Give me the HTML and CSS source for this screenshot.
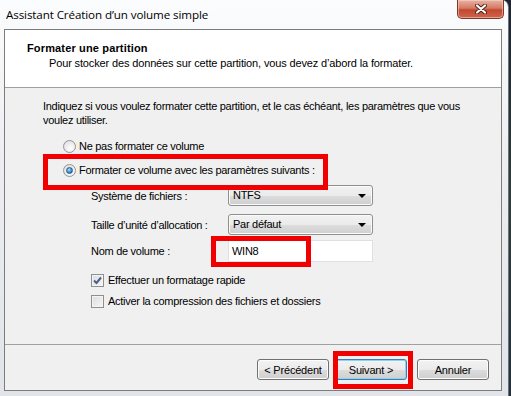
FILE: index.html
```html
<!DOCTYPE html>
<html lang="fr">
  <head>
    <meta charset="utf-8">
    <title>Assistant Création d'un volume simple</title>
    <link rel="stylesheet" href="styles.css">
  </head>
  <body>
    <div class="window">
      <div class="titlebar">
        <span class="title">Assistant Création d’un volume simple</span>
        <div class="close">
          <svg width="12" height="10" viewBox="0 0 12 10">
            <path d="M2 1.5 L10 8.5 M10 1.5 L2 8.5" stroke="#4b2219" stroke-width="4" stroke-linecap="round"/>
            <path d="M2 1.5 L10 8.5 M10 1.5 L2 8.5" stroke="#ffffff" stroke-width="2.2" stroke-linecap="round"/>
          </svg>
        </div>
      </div>

      <div class="client">
        <div class="header">
          <div class="header-title">Formater une partition</div>
          <div class="header-sub">Pour stocker des données sur cette partition, vous devez d’abord la formater.</div>
        </div>

        <div class="content">
          <p class="intro">Indiquez si vous voulez formater cette partition, et le cas échéant, les paramètres que vous<br>voulez utiliser.</p>

          <div class="option first">
            <span class="radio"></span>
            <span>Ne pas formater ce volume</span>
          </div>
          <div class="option second">
            <span class="radio checked"></span>
            <span>Formater ce volume avec les paramètres suivants :</span>
          </div>

          <div class="fields">
            <div class="field row1">
              <span class="label">Système de fichiers :</span>
              <div class="combo">NTFS<span class="arrow"></span></div>
            </div>
            <div class="field row2">
              <span class="label">Taille d’unité d’allocation :</span>
              <div class="combo">Par défaut<span class="arrow"></span></div>
            </div>
            <div class="field row3">
              <span class="label">Nom de volume :</span>
              <div class="textbox">WIN8</div>
            </div>
          </div>

          <div class="check first">
            <span class="box">
              <svg width="11" height="11" viewBox="0 0 11 11">
                <path d="M2 5.5 L4.5 8 L9 2.5" fill="none" stroke="#4a5f8f" stroke-width="2"/>
              </svg>
            </span>
            <span>Effectuer un formatage rapide</span>
          </div>
          <div class="check second">
            <span class="box"></span>
            <span>Activer la compression des fichiers et dossiers</span>
          </div>
        </div>

        <div class="footer">
          <button class="btn">&lt; Précédent</button>
          <button class="btn default">Suivant &gt;</button>
          <button class="btn cancel">Annuler</button>
        </div>
      </div>

      <div class="mark mark-option"></div>
      <div class="mark mark-name"></div>
      <div class="mark mark-next"></div>
    </div>
  </body>
</html>
```

FILE: styles.css
```css
html, body {
  margin: 0;
  padding: 0;
}
body {
  width: 511px;
  height: 396px;
  overflow: hidden;
  background: linear-gradient(#1d2530, #2e3d3a 50%, #23303c);
  font-family: "Liberation Sans", Arial, sans-serif;
  font-size: 11px;
  letter-spacing: -0.28px;
  color: #000;
}
.window {
  position: relative;
  box-sizing: border-box;
  width: 509px;
  height: 396px;
  padding: 0 6px 0 4px;
  background: linear-gradient(#fbfcfd, #eceef1 40%, #e1e4e8);
  border-top-right-radius: 7px;
  border-right: 1px solid #6d7278;
}
.titlebar {
  height: 29px;
  display: flex;
  align-items: flex-start;
}
.title {
  font-family: "Open Sans", "Noto Sans", sans-serif;
  font-size: 11.6px;
  margin: 7px 0 0 2px;
  letter-spacing: -0.1px;
}
.close {
  margin-left: auto;
  margin-right: -2px;
  width: 47px;
  height: 19px;
  box-sizing: border-box;
  border: 1px solid #7a3a2d;
  border-top: none;
  border-radius: 0 0 5px 5px;
  background: linear-gradient(#e8b3a4, #d47a64 45%, #c3472f 55%, #d0644d);
  box-shadow: inset 0 0 0 1px rgba(255, 220, 210, 0.5);
  display: flex;
  align-items: center;
  justify-content: center;
}
.client {
  height: 362px;
  box-sizing: border-box;
  border: 1px solid #7c7c7c;
  display: flex;
  flex-direction: column;
  background: #f0f0f0;
}
.header {
  height: 58px;
  box-sizing: border-box;
  background: #fff;
  border-bottom: 1px solid #a0a0a0;
  padding: 11px 0 0 22px;
  flex: none;
}
.header-title {
  font-weight: bold;
  line-height: 14px;
  letter-spacing: 0.15px;
}
.header-sub {
  line-height: 14px;
  margin-top: 1px;
  padding-left: 22px;
  letter-spacing: -0.14px;
}
.content {
  flex: 1;
  padding: 11px 0 0 38px;
}
.intro {
  margin: 0;
  line-height: 14px;
}
.option {
  display: flex;
  align-items: center;
  height: 16px;
  margin-left: 20px;
}
.option.first {
  margin-top: 11px;
}
.option.second {
  margin-top: 8px;
}
.radio {
  width: 13px;
  height: 13px;
  box-sizing: border-box;
  border-radius: 50%;
  border: 1px solid #949494;
  background: radial-gradient(circle at 60% 65%, #ffffff, #e4e4e4 70%, #d4d4d4);
  margin-right: 3px;
  position: relative;
}
.radio.checked::after {
  content: "";
  position: absolute;
  left: 2px;
  top: 2px;
  width: 7px;
  height: 7px;
  box-sizing: border-box;
  border-radius: 50%;
  border: 1px solid #265d8f;
  background: radial-gradient(circle at 40% 35%, #b9e2ff, #3a8ad0 55%, #1b5a9a);
}
.fields {
  margin-left: 48px;
  margin-top: 7px;
}
.field {
  display: flex;
  align-items: center;
}
.field.row2 {
  margin-top: 8px;
}
.field.row3 {
  margin-top: 5px;
}
.label {
  width: 137px;
}
.combo {
  position: relative;
  width: 145px;
  height: 21px;
  box-sizing: border-box;
  border: 1px solid #8e8f8f;
  border-radius: 3px;
  background: linear-gradient(#f2f2f2, #ebebeb 50%, #dddddd 51%, #cfcfcf);
  box-shadow: inset 0 0 0 1px #fafafa;
  padding: 3px 0 0 4px;
}
.arrow {
  position: absolute;
  right: 6px;
  top: 8px;
  width: 0;
  height: 0;
  border-left: 4px solid transparent;
  border-right: 4px solid transparent;
  border-top: 4px solid #000;
}
.textbox {
  width: 145px;
  height: 22px;
  box-sizing: border-box;
  border: 1px solid #dde1e6;
  background: #fff;
  padding: 4px 0 0 3px;
}
.check {
  display: flex;
  align-items: center;
  height: 16px;
  margin-left: 48px;
}
.check.first {
  margin-top: 10px;
}
.check.second {
  margin-top: 5px;
}
.box {
  width: 13px;
  height: 13px;
  box-sizing: border-box;
  border: 1px solid #8e8f8f;
  background: linear-gradient(135deg, #dcdcdc, #f6f6f6);
  box-shadow: inset 0 0 0 1px #f4f4f4;
  margin-right: 4px;
  display: flex;
  align-items: center;
  justify-content: center;
}
.footer {
  height: 46px;
  box-sizing: border-box;
  flex: none;
  border-top: 1px solid #a0a0a0;
  display: flex;
  justify-content: flex-end;
  align-items: flex-start;
  padding: 14px 12px 0 0;
}
.btn {
  width: 72px;
  height: 21px;
  box-sizing: border-box;
  border: 1px solid #707070;
  border-radius: 3px;
  background: linear-gradient(#f2f2f2, #ebebeb 50%, #dddddd 51%, #cfcfcf);
  box-shadow: inset 0 0 0 1px #fcfcfc;
  font-family: "Liberation Sans", Arial, sans-serif;
  font-size: 11px;
  letter-spacing: -0.2px;
  color: #000;
  padding: 0;
}
.btn.default {
  margin-left: 6px;
  border-color: #3c7fb1;
  box-shadow: inset 0 0 0 1px #8fd0f5;
}
.btn.cancel {
  margin-left: 10px;
}
.mark {
  position: absolute;
  border: 5px solid #f00000;
  box-sizing: border-box;
}
.mark-option {
  left: 43px;
  top: 154px;
  width: 285px;
  height: 36px;
}
.mark-name {
  left: 211px;
  top: 236px;
  width: 100px;
  height: 31px;
}
.mark-next {
  left: 333px;
  top: 351px;
  width: 80px;
  height: 38px;
}
```
